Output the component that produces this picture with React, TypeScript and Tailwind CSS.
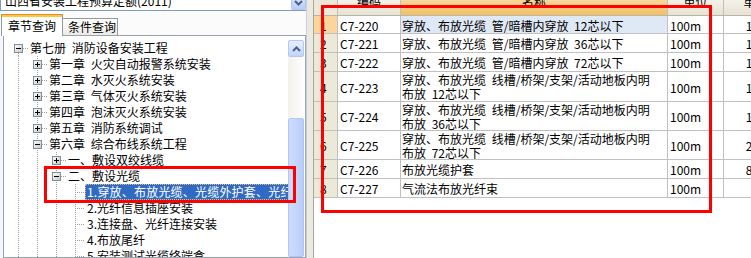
import React from "react";

type TNode = { level: number; text: string; box?: "+" | "-"; selected?: boolean; first?: boolean };

const treeNodes: TNode[] = [
  { level: 0, text: "第七册 消防设备安装工程", box: "-", first: true },
  { level: 1, text: "第一章 火灾自动报警系统安装", box: "+" },
  { level: 1, text: "第二章 水灭火系统安装", box: "+" },
  { level: 1, text: "第三章 气体灭火系统安装", box: "+" },
  { level: 1, text: "第四章 泡沫灭火系统安装", box: "+" },
  { level: 1, text: "第五章 消防系统调试", box: "+" },
  { level: 1, text: "第六章 综合布线系统工程", box: "-" },
  { level: 2, text: "一、敷设双绞线缆", box: "+" },
  { level: 2, text: "二、敷设光缆", box: "-" },
  { level: 3, text: "1.穿放、布放光缆、光缆外护套、光纤束", selected: true },
  { level: 3, text: "2.光纤信息插座安装" },
  { level: 3, text: "3.连接盘、光纤连接安装" },
  { level: 3, text: "4.布放尾纤" },
  { level: 3, text: "5.安装测试光缆终端盒" },
];

const cx = (l: number) => 14 + 19 * l;

function TreeRow({ n, i }: { n: TNode; i: number }) {
  const c = cx(n.level);
  const w = c + 10;
  const verts: React.ReactNode[] = [];
  for (let a = 0; a <= n.level; a++) {
    const x = cx(a) + 0.5;
    const y1 = a === n.level && n.first ? 9 : 0;
    verts.push(
      <line key={a} x1={x} y1={y1} x2={x} y2={16} stroke="#a0a0a0" strokeDasharray="1 1" />
    );
  }
  const gid = `tb${i}`;
  return (
    <div className="flex h-[16px] shrink-0 items-center">
      <svg width={w} height={16} className="shrink-0">
        <defs>
          <linearGradient id={gid} x1="0" y1="0" x2="1" y2="1">
            <stop offset="0" stopColor="#ffffff" />
            <stop offset="1" stopColor="#c8c8bc" />
          </linearGradient>
        </defs>
        {verts}
        <line
          x1={n.box ? c + 5 : c}
          y1={8.5}
          x2={w}
          y2={8.5}
          stroke="#a0a0a0"
          strokeDasharray="1 1"
        />
        {n.box && (
          <g>
            <rect x={c - 3.5} y={4.5} width={8} height={8} fill={`url(#${gid})`} stroke="#7a8ea4" />
            <line x1={c - 2} y1={8.5} x2={c + 3} y2={8.5} stroke="#000" />
            {n.box === "+" && <line x1={c + 0.5} y1={6} x2={c + 0.5} y2={11} stroke="#000" />}
          </g>
        )}
      </svg>
      <div
        className={
          "h-[16px] whitespace-nowrap px-[1px] leading-[14px] [word-spacing:3px] " +
          (n.selected
            ? "bg-[#316ac5] text-white border border-dotted border-[#e0c070] tracking-[0.2px]"
            : "border border-transparent text-black")
        }
      >
        {n.text}
      </div>
    </div>
  );
}

type Row = {
  n: number;
  code: string;
  name: string[];
  unit: string;
  price: string;
  h: string;
  sel?: boolean;
};

const rows: Row[] = [
  { n: 1, code: "C7-220", name: ["穿放、布放光缆 管/暗槽内穿放 12芯以下"], unit: "100m", price: "1176.35", h: "h-[18px]", sel: true },
  { n: 2, code: "C7-221", name: ["穿放、布放光缆 管/暗槽内穿放 36芯以下"], unit: "100m", price: "1365.42", h: "h-[19px]" },
  { n: 3, code: "C7-222", name: ["穿放、布放光缆 管/暗槽内穿放 72芯以下"], unit: "100m", price: "1533.31", h: "h-[19px]" },
  { n: 4, code: "C7-223", name: ["穿放、布放光缆 线槽/桥架/支架/活动地板内明", "布放 12芯以下"], unit: "100m", price: "1136.59", h: "h-[30px]" },
  { n: 5, code: "C7-224", name: ["穿放、布放光缆 线槽/桥架/支架/活动地板内明", "布放 36芯以下"], unit: "100m", price: "1624.55", h: "h-[29px]" },
  { n: 6, code: "C7-225", name: ["穿放、布放光缆 线槽/桥架/支架/活动地板内明", "布放 72芯以下"], unit: "100m", price: "2031.67", h: "h-[29px]" },
  { n: 7, code: "C7-226", name: ["布放光缆护套"], unit: "100m", price: "8120.40", h: "h-[19px]" },
  { n: 8, code: "C7-227", name: ["气流法布放光纤束"], unit: "100m", price: "356.18", h: "h-[19px]" },
];

export default function App() {
  return (
    <div className="relative flex h-[258px] w-[751px] overflow-hidden bg-white font-['Noto_Sans_CJK_SC','Liberation_Sans',sans-serif] text-[12px] text-black">
      {/* Left panel */}
      <div className="flex h-full w-[306px] shrink-0 flex-col bg-[#f6f7fa]">
        {/* combobox (clipped) */}
        <div className="flex h-[11px] shrink-0 border-b border-l border-[#7f9db9] bg-white">
          <div className="flex-1 overflow-hidden pl-[4px]">
            <div className="mt-[-5px] whitespace-nowrap leading-[12px]">山西省安装工程预算定额(2011)</div>
          </div>
          <div className="flex w-[15px] items-start justify-center rounded-b-[2px] border border-t-0 border-[#b1c6f5] bg-gradient-to-b from-[#d2defc] to-[#b9cdf9]">
            <svg width="9" height="6">
              <path d="M1 1 L4.5 4.5 L8 1" stroke="#4d6185" strokeWidth="2" fill="none" />
            </svg>
          </div>
        </div>
        {/* tabs */}
        <div className="flex h-[24px] shrink-0 items-end bg-[#fbfbfc] pl-[1px]">
          <div className="relative z-10 -mb-px flex h-[22px] w-[62px] flex-col border-x border-[#919b9c] bg-white">
            <div className="h-[1px] bg-[#e68b2c]" />
            <div className="h-[2px] bg-[#ffc83c]" />
            <div className="pl-[6px] pt-[2px] leading-[14px]">章节查询</div>
          </div>
          <div className="flex h-[17px] w-[55px] items-center border-r border-t border-[#919b9c] bg-gradient-to-b from-white to-[#ecebe6] pl-[5px] leading-[14px]">
            条件查询
          </div>
        </div>
        {/* tree panel */}
        <div className="ml-[3px] flex min-h-0 w-[303px] flex-1 border border-[#98a2b0] bg-white pt-[4px]">
          <div className="flex min-w-0 flex-1 flex-col overflow-hidden">
            {treeNodes.map((n, i) => (
              <TreeRow key={i} n={n} i={i} />
            ))}
          </div>
          {/* scrollbar */}
          <div className="mr-[1px] flex w-[16px] shrink-0 flex-col bg-gradient-to-r from-[#f3f1ec] to-[#fefefe]">
            <div className="flex h-[17px] shrink-0 items-center justify-center rounded-[2px] border border-[#b4c8f6] bg-gradient-to-b from-[#e8effd] to-[#c3d3fb]">
              <svg width="9" height="6">
                <path d="M1 5 L4.5 1.5 L8 5" stroke="#4d6185" strokeWidth="2" fill="none" />
              </svg>
            </div>
            <div className="h-[61px] shrink-0" />
            <div className="flex-1 rounded-[2px] border border-[#b1c6f5] bg-gradient-to-r from-[#cddbfd] via-[#c6d6fc] to-[#b9cdf9]" />
          </div>
        </div>
      </div>

      {/* splitter */}
      <div className="h-full w-[8px] shrink-0 border-l border-r border-l-[#c9cfdb] border-r-[#a8a8a0] bg-[#eceae0]" />

      {/* right grid */}
      <div className="flex h-full min-w-0 flex-1 flex-col overflow-hidden bg-white">
        {/* header */}
        <div className="flex h-[16px] shrink-0 border-b border-[#b8b6a8]">
          <div className="w-[24px] shrink-0 border-r border-[#c0c0c0] bg-[#ece9d8]" />
          <div className="flex w-[63px] shrink-0 justify-center overflow-hidden border-r border-[#c0c0c0] bg-gradient-to-b from-[#f4f2e8] to-[#e6e3d4]">
            <div className="mt-[-4px] leading-[12px]">编码</div>
          </div>
          <div className="flex w-[267px] shrink-0 justify-center overflow-hidden border-r border-[#c0c0c0] bg-gradient-to-b from-[#f9d89c] to-[#f2bf63]">
            <div className="mt-[-4px] leading-[12px]">名称</div>
          </div>
          <div className="flex w-[56px] shrink-0 justify-center overflow-hidden border-r border-[#c0c0c0] bg-gradient-to-b from-[#f4f2e8] to-[#e6e3d4]">
            <div className="mt-[-4px] leading-[12px]">单位</div>
          </div>
          <div className="flex w-[64px] shrink-0 justify-center overflow-hidden border-r border-[#c0c0c0] bg-gradient-to-b from-[#f4f2e8] to-[#e6e3d4]">
            <div className="mt-[-4px] leading-[12px]">单价</div>
          </div>
          <div className="flex-1 bg-[#ece9d8]" />
        </div>
        {rows.map((r) => (
          <div key={r.n} className={`flex shrink-0 border-b border-[#c0c0c0] ${r.h}`}>
            <div
              className={`flex w-[24px] shrink-0 items-center border-r border-[#c0c0c0] pl-[6px] pt-[2px] ${
                r.sel ? "bg-[#fdd59a]" : "bg-[#ece9d8]"
              }`}
            >
              {r.n}
            </div>
            <div className="flex w-[63px] shrink-0 items-center border-r border-[#c0c0c0] pl-[2px] pt-[2px]">
              {r.code}
            </div>
            <div
              className={`w-[267px] shrink-0 overflow-hidden whitespace-nowrap border-r border-[#c0c0c0] pl-[1px] [word-spacing:3px] ${
                r.name.length > 1 ? "pt-[1px] leading-[14px]" : "pt-[3px] leading-[13px]"
              } ${r.sel ? "bg-[#dfe8f5]" : ""}`}
            >
              {r.name.map((l, k) => (
                <div key={k}>{l}</div>
              ))}
            </div>
            <div className="flex w-[56px] shrink-0 items-center border-r border-[#c0c0c0] pl-[2px] pt-[2px]">
              {r.unit}
            </div>
            <div className="flex w-[64px] shrink-0 items-center justify-end border-r border-[#c0c0c0] pt-[2px]">
              <span className="-mr-[2px] whitespace-nowrap">{r.price}</span>
            </div>
            <div className="flex-1" />
          </div>
        ))}
      </div>

      {/* red annotation boxes */}
      <div className="pointer-events-none absolute left-[44px] top-[166px] h-[37px] w-[252px] border-[3px] border-[#ff0000]" />
      <div className="pointer-events-none absolute left-[321px] top-[5px] h-[208px] w-[391px] border-[3px] border-[#ff0000]" />
    </div>
  );
}
